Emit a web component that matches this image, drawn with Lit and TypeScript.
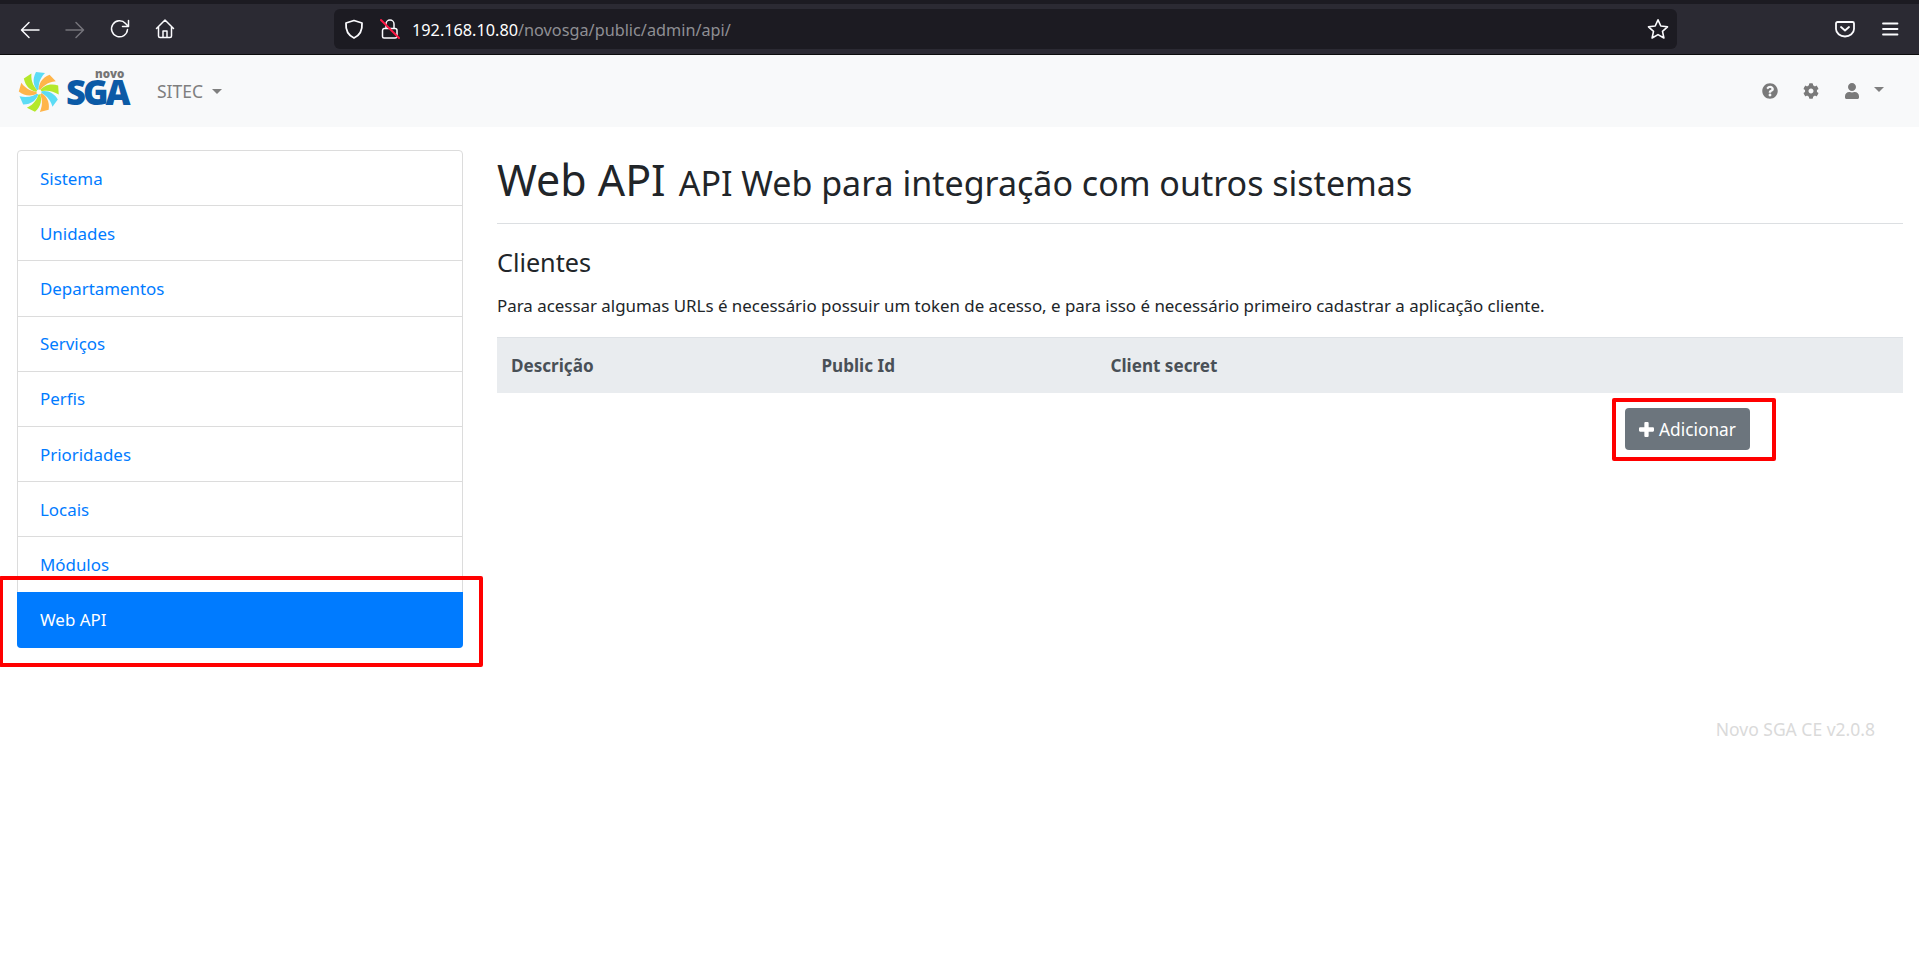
import { LitElement, html, css, svg } from "lit";
import { customElement } from "lit/decorators.js";

const items = ["Sistema", "Unidades", "Departamentos", "Serviços", "Perfis", "Prioridades", "Locais", "Módulos", "Web API"];
const petalColors = ["#5cdcf5", "#ffb54a", "#b4e82c"];

@customElement("app-root")
export class AppRoot extends LitElement {
  static styles = css`
    :host { display: block; position: relative; height: 977px; overflow: hidden; background: #fff; font-family: "Noto Sans", "Open Sans", sans-serif; color: #212529; font-size: 16.9px; }
    * { box-sizing: border-box; }
    .browser { height: 55px; background: #2b2a33; border-top: 4px solid #1c1b22; border-bottom: 1px solid #0c0c0d; display: flex; align-items: center; padding: 0 17px 0 18px; }
    .tb { width: 24px; height: 24px; margin-right: 21px; flex: none; fill: none; stroke: #fbfbfe; stroke-width: 1.5; stroke-linecap: round; stroke-linejoin: round; }
    .tb.off { stroke: #75747b; }
    .tb.last { margin-right: 0; }
    .urlbar { margin-left: 157px; width: 1343px; height: 40px; border-radius: 6px; background: #1c1b22; display: flex; align-items: center; padding: 0 7px 0 8px; }
    .urlbar .tb { margin-right: 12px; }
    .url { margin-left: -2px; padding-top: 1px; font-size: 16.25px; color: #fff; flex: 1; white-space: nowrap; }
    .url span { color: #8f8f94; }
    .urlbar .star { margin: 0; }
    .right-tools { margin-left: auto; display: flex; gap: 21px; align-items: center; }
    .right-tools .tb { margin: 0; }

    .navbar { height: 72px; background: #f8f9fa; display: flex; align-items: center; padding: 0 30px 0 18px; color: #7f7f7f; }
    .logo { position: relative; width: 114px; height: 44px; flex: none; }
    .logo svg { position: absolute; left: 0; top: 2px; width: 42px; height: 42px; }
    .logo .sga { position: absolute; left: 48px; top: 10px; font-family: "Open Sans", sans-serif; font-weight: 800; font-size: 34.5px; line-height: 26px; letter-spacing: -3px; color: #0b5aa6; }
    .logo .novo { position: absolute; left: 77px; top: 0; font-family: "Open Sans", sans-serif; font-weight: 800; font-size: 11.5px; line-height: 9px; color: #757575; }
    .brand { margin-left: 25px; font-size: 17.5px; display: flex; align-items: center; gap: 9px; }
    .caret { width: 0; height: 0; border-left: 5px solid transparent; border-right: 5px solid transparent; border-top: 5px solid #7f7f7f; display: inline-block; }
    .nav-right { margin-left: auto; display: flex; align-items: center; }
    .nav-right svg { width: 16px; height: 16px; fill: #7a7a7a; display: block; }
    .nav-right .gap { margin-left: 25px; }
    .nav-right .caret { margin-left: 14px; margin-top: -4px; margin-right: 5px; }

    .main { display: grid; grid-template-columns: 446px 1fr; gap: 34px; padding: 23px 16px 0 17px; }
    .list { border: 1px solid #dcdcdc; border-radius: 4px; display: flex; flex-direction: column; align-self: start; }
    .list a { height: 55.2px; flex: none; display: flex; align-items: center; padding-left: 22px; color: #007bff; border-bottom: 1px solid #dcdcdc; font-size: 16.9px; }
    .list a.active { background: #007bff; color: #fff; border: 0; margin: -1px -1px -1px; border-radius: 0 0 4px 4px; padding-left: 23px; height: 56px; }

    .content { min-width: 0; }
    .head { border-bottom: 1px solid #dcdfe2; height: 74px; display: flex; align-items: baseline; gap: 13px; white-space: nowrap; }
    h1 { font-size: 42.9px; font-weight: 400; margin: 0; line-height: 59px; }
    .head small { font-size: 34px; font-weight: 400; color: #212529; }
    h2 { font-size: 25.2px; font-weight: 400; margin: 18px 0 0; line-height: 40px; height: 40px; }
    p { margin: 12px 0 0; line-height: 24px; font-size: 16.9px; height: 24px; white-space: nowrap; }
    .thead { margin-top: 19px; height: 56px; background: #e9ecef; border-top: 1px solid #dee2e6; display: grid; grid-template-columns: 310.5px 289px 1fr; align-items: center; font-weight: 700; color: #495057; padding-left: 14px; font-size: 17.1px; }
    .row { display: flex; justify-content: flex-end; padding: 15px 153px 0 0; }
    .btn { height: 42px; width: 125px; background: #6c757d; border-radius: 4px; color: #fff; display: flex; align-items: center; justify-content: center; gap: 5px; font-size: 17.3px; }
    .btn svg { width: 15px; height: 15px; fill: #fff; }
    .ver { position: absolute; top: 717px; right: 44px; color: #dadada; font-size: 17.5px; line-height: 24px; }
    .mark { position: absolute; border: 4px solid #ff0000; border-radius: 2px; pointer-events: none; }
    .m1 { left: -1px; top: 576px; width: 484px; height: 91px; }
    .m2 { left: 1612px; top: 398px; width: 164px; height: 63px; }
  `;

  private petals() {
    return Array.from({ length: 9 }, (_, i) => svg`<path transform="rotate(${i * 40} 21 21)" fill=${petalColors[i % 3]} d="M21 21C15 16 14 8 18 1L27 2C21 8 20 15 21 21Z"/>`);
  }

  render() {
    return html`
      <div class="browser">
        <svg class="tb" viewBox="0 0 24 24"><path d="M21 13H4M11 5.500 3.500 13 11 20.500"/></svg>
        <svg class="tb off" viewBox="0 0 24 24"><path d="M3 13h17M13 5.500l7.500 7.500-7.500 7.500"/></svg>
        <svg class="tb" viewBox="0 0 24 24"><path d="M19.500 12.500A8 8 0 1 1 17.500 6.500L20.500 9.500M20.500 3.500v6h-6"/></svg>
        <svg class="tb last" viewBox="0 0 24 24"><path d="M3.500 11.500 12 3l8.500 8.500M5.500 10v9a1.500 1.500 0 0 0 1.500 1.500h10a1.500 1.500 0 0 0 1.500-1.500v-9M10 20.500V14h4v6.500"/></svg>
        <div class="urlbar">
          <svg class="tb" viewBox="0 0 24 24"><path d="M12 3.500 20 6c.5 7-1.500 12-8 15C5.500 18 3.500 13 4 6Z" stroke-width="1.800"/></svg>
          <svg class="tb" viewBox="0 0 24 24"><path d="M6 11.500h11a2 2 0 0 1 2 2V19a2 2 0 0 1-2 2H6a1.500 1.500 0 0 1-1.500-1.500v-6A2 2 0 0 1 6 11.500ZM8 11V7a4 4 0 0 1 8 0v4"/><path d="M3 3 21 21" stroke="#ff1744" stroke-width="2"/></svg>
          <div class="url">192.168.10.80<span>/novosga/public/admin/api/</span></div>
          <svg class="tb star" viewBox="0 0 24 24"><path d="M12 2.800 14.800 9 21.500 9.800 16.500 14.300 17.900 21 12 17.600 6.100 21 7.500 14.300 2.500 9.800 9.200 9Z" stroke-width="1.600"/></svg>
        </div>
        <div class="right-tools">
          <svg class="tb" viewBox="0 0 24 24"><path d="M4.500 5h15A1.500 1.500 0 0 1 21 6.500v5.500a9 7.500 0 0 1-18 0V6.500A1.500 1.500 0 0 1 4.500 5ZM8 10l4 3.500 4-3.500" stroke-width="1.800"/></svg>
          <svg class="tb" viewBox="0 0 24 24"><path d="M5 6.500h14.500M5 12h14.500M5 17.500h14.500" stroke-width="1.800"/></svg>
        </div>
      </div>

      <div class="navbar">
        <div class="logo">
          <svg viewBox="0 0 42 42">${this.petals()}<circle cx="21" cy="21" r="2.500" fill="#f8f9fa"/></svg>
          <span class="novo">novo</span>
          <span class="sga">SGA</span>
        </div>
        <div class="brand">SITEC <span class="caret"></span></div>
        <div class="nav-right">
          <svg viewBox="0 0 512 512"><path d="M504 256c0 137-111 248-248 248S8 393 8 256 119 8 256 8s248 111 248 248zM262.700 90c-54.500 0-89.300 23-116.500 63.800-3.500 5.300-2.400 12.400 2.700 16.300l34.700 26.300c5.200 3.900 12.600 3 16.700-2.100 17.900-22.700 30.100-35.800 57.300-35.800 20.400 0 45.700 13.100 45.700 32.900 0 15-12.400 22.700-32.600 34C247.100 238.500 216 254.900 216 296v4c0 6.600 5.400 12 12 12h56c6.600 0 12-5.400 12-12v-1.300c0-28.500 83.200-29.600 83.200-106.700 0-58-60.200-102-116.500-102zM256 338c-25.400 0-46 20.600-46 46s20.600 46 46 46 46-20.600 46-46-20.600-46-46-46z"/></svg>
          <svg class="gap" viewBox="0 0 512 512"><path d="M487.400 315.700l-42.600-24.600c4.300-23.200 4.300-47 0-70.200l42.600-24.600c4.900-2.800 7.100-8.600 5.500-14-11.100-35.600-30-67.800-54.700-94.600-3.800-4.100-10-5.100-14.800-2.300L380.800 110c-17.900-15.400-38.500-27.300-60.800-35.100V25.800c0-5.600-3.900-10.500-9.400-11.700-36.700-8.200-74.300-7.800-109.200 0-5.500 1.200-9.400 6.100-9.400 11.700V75c-22.200 7.900-42.800 19.800-60.800 35.100L88.700 85.500c-4.900-2.800-11-1.900-14.800 2.300-24.700 26.700-43.600 58.900-54.700 94.600-1.700 5.400.6 11.200 5.500 14L67.300 221c-4.300 23.200-4.300 47 0 70.200l-42.600 24.600c-4.900 2.800-7.100 8.600-5.500 14 11.100 35.600 30 67.800 54.700 94.600 3.800 4.100 10 5.100 14.800 2.300l42.600-24.600c17.900 15.400 38.500 27.300 60.800 35.100v49.200c0 5.600 3.900 10.500 9.400 11.700 36.700 8.200 74.300 7.800 109.200 0 5.500-1.200 9.400-6.100 9.400-11.700v-49.200c22.200-7.900 42.800-19.800 60.800-35.100l42.600 24.600c4.900 2.800 11 1.900 14.800-2.300 24.700-26.700 43.600-58.900 54.700-94.600 1.500-5.500-.7-11.300-5.600-14.100zM256 336c-44.100 0-80-35.900-80-80s35.900-80 80-80 80 35.900 80 80-35.900 80-80 80z"/></svg>
          <svg class="gap" viewBox="0 0 448 512"><path d="M224 256c70.700 0 128-57.300 128-128S294.700 0 224 0 96 57.300 96 128s57.300 128 128 128zm89.600 32h-16.700c-22.200 10.200-46.900 16-72.900 16s-50.600-5.800-72.900-16h-16.700C60.200 288 0 348.200 0 422.400V464c0 26.500 21.500 48 48 48h352c26.500 0 48-21.500 48-48v-41.600c0-74.200-60.200-134.400-134.400-134.400z"/></svg>
          <span class="caret"></span>
        </div>
      </div>

      <div class="main">
        <div class="list">
          ${items.map((t) => html`<a class=${t === "Web API" ? "active" : ""}>${t}</a>`)}
        </div>
        <div class="content">
          <div class="head"><h1>Web API</h1><small>API Web para integração com outros sistemas</small></div>
          <h2>Clientes</h2>
          <p>Para acessar algumas URLs é necessário possuir um token de acesso, e para isso é necessário primeiro cadastrar a aplicação cliente.</p>
          <div class="thead"><span>Descrição</span><span>Public Id</span><span>Client secret</span></div>
          <div class="row"><div class="btn"><svg viewBox="0 0 14 14"><path d="M5 1a1 1 0 0 1 1-1h2a1 1 0 0 1 1 1v4h4a1 1 0 0 1 1 1v2a1 1 0 0 1-1 1H9v4a1 1 0 0 1-1 1H6a1 1 0 0 1-1-1V9H1a1 1 0 0 1-1-1V6a1 1 0 0 1 1-1h4Z"/></svg>Adicionar</div></div>
        </div>
      </div>
      <div class="ver">Novo SGA CE v2.0.8</div>
      <div class="mark m1"></div>
      <div class="mark m2"></div>
    `;
  }
}
